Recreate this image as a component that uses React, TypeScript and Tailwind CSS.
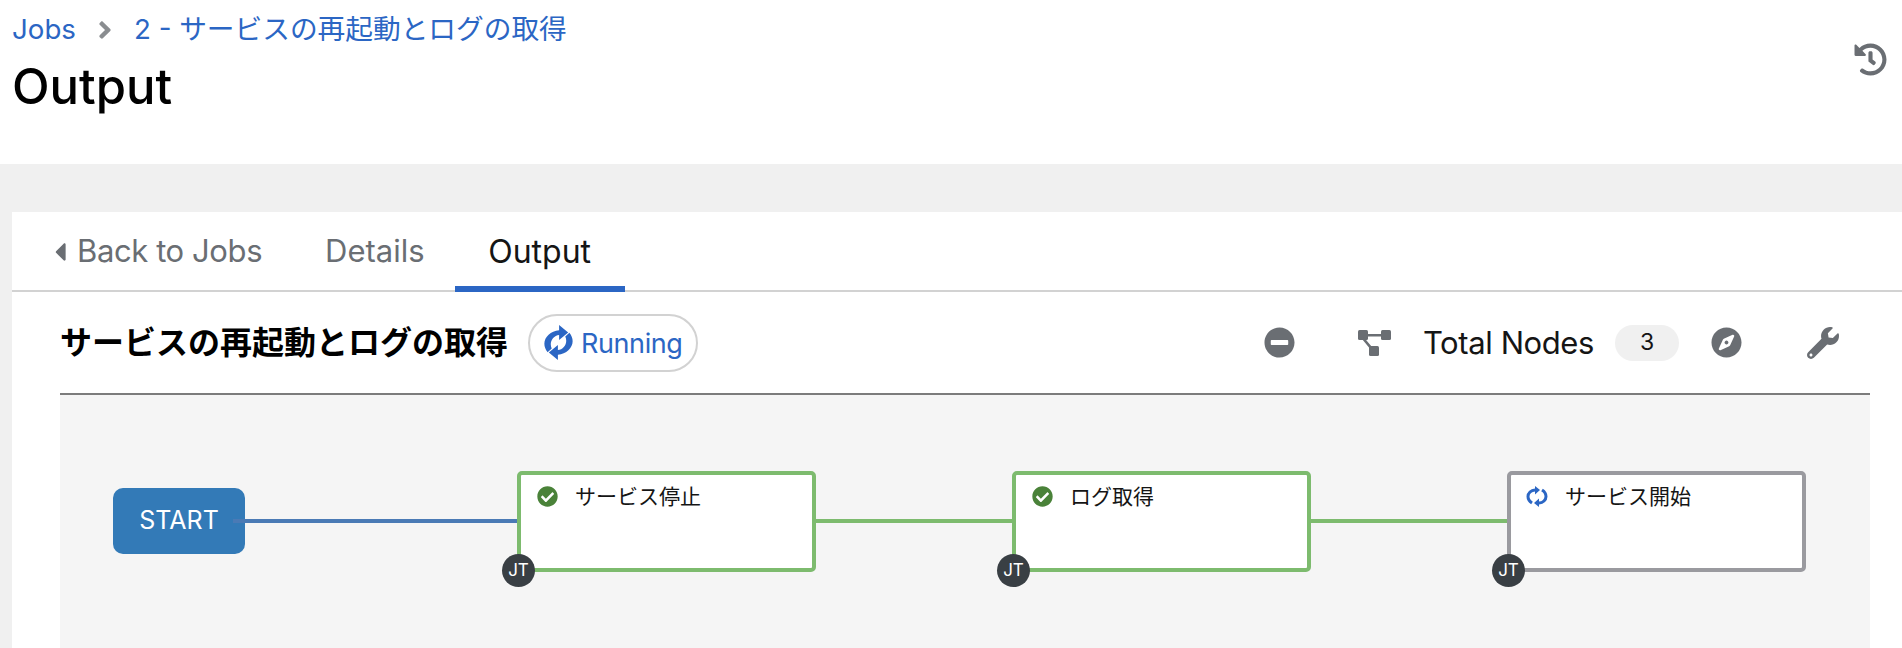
import React from "react";
import {
  FaAngleRight,
  FaCaretLeft,
  FaCheckCircle,
  FaCompass,
  FaHistory,
  FaMinusCircle,
  FaWrench,
} from "react-icons/fa";

const font = "font-['Inter','Noto_Sans_CJK_JP',sans-serif]";

function TopologyIcon() {
  return (
    <svg viewBox="0 0 33 26" className="h-[26px] w-[33px] text-[#6a6e73]" fill="currentColor">
      <rect x="0" y="0" width="10" height="10" rx="1.5" />
      <rect x="23" y="0" width="10" height="10" rx="1.5" />
      <rect x="11" y="16" width="10" height="10" rx="1.5" />
      <path d="M10 4h13v2.5H10zM4 9l2.2-1.2 8 9.5-2.2 1.5z" />
    </svg>
  );
}

// two arcs chasing each other, taller than the stock sync icon
function SyncIcon({ className }: { className: string }) {
  return (
    <svg viewBox="0 0 24 29" preserveAspectRatio="none" className={className} fill="currentColor">
      <path d="M12.5 0 20 6.3 12.5 12.5V8.2C8.6 8.6 5.6 12 5.6 16c0 1.2.3 2.4.8 3.4L3 22.5C1.2 20.2.3 18 .3 15.5.3 10 5.6 4.900 12.500 4.400z" />
      <path d="M11.500 29 4 22.700 11.500 16.500V20.800C15.400 20.400 18.400 17 18.400 13c0-1.200-.3-2.400-.8-3.400L21 6.500c1.800 2.300 2.700 4.500 2.700 7 0 5.500-5.300 10.600-12.200 11.100z" />
    </svg>
  );
}

// the smaller one on the nodes, open C shapes with a head on each end
function NodeSyncIcon() {
  return (
    <svg viewBox="0 0 22 21" className="-ml-[1px] h-[21px] w-[22px] text-[#2b66c4]">
      <path d="M6 17C3.200 15.200 2 13 2 10.500 2 7 5 4.200 9 4" fill="none" stroke="currentColor" strokeWidth="3" />
      <path d="M16 4c2.800 1.800 4 4 4 6.500 0 3.500-3 6.300-7 6.500" fill="none" stroke="currentColor" strokeWidth="3" />
      <path d="M9 0l5 4-5 4.500zM13 12.500 8 17l5 4z" fill="currentColor" />
    </svg>
  );
}

function WorkflowNode({
  label,
  border,
  icon,
  className,
}: {
  label: string;
  border: string;
  icon: React.ReactNode;
  className: string;
}) {
  return (
    <div className={`absolute top-[76px] h-[101px] w-[299px] rounded-[5px] border-4 bg-white ${border} ${className}`}>
      <div className="flex h-[42px] items-center gap-[17px] pl-[16px] pt-[1px] text-[21px] text-[#151515]">
        {icon}
        <span>{label}</span>
      </div>
      <div className="absolute bottom-[-19px] left-[-19px] flex h-[33px] w-[33px] items-center justify-center rounded-full bg-[#393f44] text-[17px] text-white">
        JT
      </div>
    </div>
  );
}

export default function App() {
  return (
    <div className={`h-[648px] overflow-hidden bg-white ${font}`}>
      <header className="flex h-[164px] justify-between pl-3 pr-[15px]">
        <div>
          <nav className="flex h-[59px] items-center text-[27.7px] text-[#2b66c4]">
            <a>Jobs</a>
            <FaAngleRight className="ml-[15px] mr-[15px] text-[28px] text-[#8a8d90]" />
            <a>2 - サービスの再起動とログの取得</a>
          </nav>
          <h1 className="text-[49px] font-medium leading-[56px] text-[#000]">Output</h1>
        </div>
        <FaHistory className="mt-[43px] text-[33px] text-[#6a6e73]" />
      </header>

      <main className="h-[484px] bg-[#f0f0f0] pl-3 pt-12">
        <section className="h-full bg-white">
          <div className="flex h-[80px] items-stretch border-b-[2px] border-[#d2d2d2] pl-[33px] text-[31px]">
            <a className="flex items-center gap-[2px] pr-[28px] pt-[1px] tracking-[-0.4px] text-[#6a6e73]">
              <FaCaretLeft className="text-[30px]" />
              Back to Jobs
            </a>
            <a className="flex items-center pl-[35px] pr-[30px] pt-[1px] text-[#6a6e73]">Details</a>
            <a className="relative flex w-[170px] items-center justify-center pt-[1px] text-[32px] text-[#151515]">
              Output
              <span className="absolute inset-x-0 bottom-[-2px] h-[6px] bg-[#2b66c4]" />
            </a>
          </div>

          <div className="ml-12 mr-8 flex h-[103px] items-center justify-between border-b-[2px] border-[#7c7c7c]">
            <div className="flex items-center gap-[20px]">
              <h2 className="pt-[1px] text-[32px] font-bold text-[#000]">サービスの再起動とログの取得</h2>
              <div className="flex h-[58px] w-[170px] items-center gap-[8px] rounded-full border-2 border-[#d2d2d2] pl-[14px] text-[27px] tracking-[-0.4px] text-[#2b66c4]">
                <SyncIcon className="h-[35px] w-[29px]" />
                <span className="pt-[3px]">Running</span>
              </div>
            </div>
            <div className="flex items-center text-[#6a6e73]">
              <FaMinusCircle className="text-[31px]" />
              <div className="ml-[63px]">
                <TopologyIcon />
              </div>
              <span className="ml-[32px] pt-[1px] text-[31px] tracking-[-0.4px] text-[#151515]">Total Nodes</span>
              <span className="ml-[21px] flex h-[36px] w-[64px] items-center justify-center rounded-full bg-[#f0f0f0] text-[23px] text-[#151515]">
                3
              </span>
              <FaCompass className="ml-[32px] text-[31px]" />
              <FaWrench className="ml-[65px] mr-[31px] text-[32px]" />
            </div>
          </div>

          <div className="relative ml-12 mr-8 h-[253px] bg-[#f5f5f5]">
            <div className="absolute left-[53px] top-[93px] flex h-[66px] w-[132px] items-center justify-center rounded-[10px] bg-[#337ab7] text-[25px] text-white">
              START
            </div>
            <div className="absolute left-[173px] top-[124px] h-[4px] w-[285px] bg-[#4a7ab5]" />
            <div className="absolute left-[756px] top-[124px] h-[4px] w-[197px] bg-[#7dbb6e]" />
            <div className="absolute left-[1251px] top-[124px] h-[4px] w-[197px] bg-[#7dbb6e]" />
            <WorkflowNode
              label="サービス停止"
              border="border-[#7dbb6e]"
              className="left-[457px]"
              icon={<FaCheckCircle className="text-[21px] text-[#4a8239]" />}
            />
            <WorkflowNode
              label="ログ取得"
              border="border-[#7dbb6e]"
              className="left-[952px]"
              icon={<FaCheckCircle className="text-[21px] text-[#4a8239]" />}
            />
            <WorkflowNode
              label="サービス開始"
              border="border-[#9a9a9f]"
              className="left-[1447px]"
              icon={<NodeSyncIcon />}
            />
          </div>
        </section>
      </main>
    </div>
  );
}
